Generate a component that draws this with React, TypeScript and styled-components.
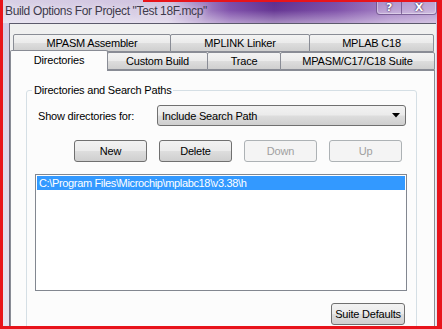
import React from 'react';
import styled, { createGlobalStyle } from 'styled-components';

const GlobalStyle = createGlobalStyle`
  html, body {
    margin: 0;
    padding: 0;
    background: #ffffff;
  }
  body {
    font-family: 'Liberation Sans', Arial, sans-serif;
    font-size: 11px;
    letter-spacing: -0.2px;
    color: #000;
  }
`;

const Window = styled.div`
  position: relative;
  width: 442px;
  height: 329px;
  overflow: hidden;
  display: flex;
  flex-direction: column;
  background: linear-gradient(180deg, #d3c7e1 0%, #ddd6e9 40%, #e7e3ef 100%);
`;

const TitleBar = styled.div`
  height: 23px;
  flex: none;
  display: flex;
  justify-content: space-between;
  align-items: flex-start;
  background:
    linear-gradient(180deg, rgba(255, 255, 255, 0) 0%, rgba(255, 255, 255, 0.05) 45%, rgba(255, 255, 255, 0.45) 100%),
    linear-gradient(90deg, #d8d0e6 0%, #d0c3e0 38%, #7b4aa8 52%, #5e2c8e 62%, #7a4aa6 76%, #a07bc2 88%, #b295cc 100%);
`;

const Title = styled.div`
  padding: 4px 0 0 5px;
  font-size: 12px;
  letter-spacing: -0.35px;
  color: #3e3a4c;
  text-shadow: 0 0 6px rgba(255, 255, 255, 0.9);
`;

const CaptionButtons = styled.div`
  display: flex;
  margin-right: 5px;
  height: 14px;
  border: 1px solid rgba(70, 40, 100, 0.55);
  border-top: none;
  border-radius: 0 0 4px 4px;
  box-shadow: inset 0 0 0 1px rgba(255, 255, 255, 0.35);
  background: linear-gradient(180deg, rgba(255, 255, 255, 0.15), rgba(255, 255, 255, 0.3));
`;

const CaptionButton = styled.div<{ $w: number }>`
  width: ${(p) => p.$w}px;
  display: flex;
  align-items: center;
  justify-content: center;
  font-family: 'DejaVu Sans', sans-serif;
  font-weight: bold;
  font-size: 11px;
  color: #fff;
  text-shadow: 0 0 2px #3a2050, 0 0 1px #3a2050;
  & + & {
    border-left: 1px solid rgba(70, 40, 100, 0.55);
  }
`;

const Client = styled.div`
  flex: 1;
  margin: 0 6px 0 9px;
  border-top: 1px solid #5c5a6c;
  border-left: 1px solid #6e6c7e;
  background: #f0f0f0;
  padding-top: 10px;
  display: flex;
  flex-direction: column;
`;

const TabRow = styled.div<{ $indent: number }>`
  display: flex;
  align-items: flex-end;
  padding-left: ${(p) => p.$indent}px;
  height: ${(p) => (p.$indent ? 18 : 18)}px;
  position: relative;
  z-index: 1;
`;

const Tab = styled.div<{ $w: number; $active?: boolean }>`
  width: ${(p) => p.$w}px;
  height: ${(p) => (p.$active ? 21 : 18)}px;
  margin-bottom: ${(p) => (p.$active ? -1 : 0)}px;
  box-sizing: border-box;
  border: 1px solid #898c95;
  border-bottom: ${(p) => (p.$active ? 'none' : '1px solid #898c95')};
  border-radius: 2px 2px 0 0;
  background: ${(p) =>
    p.$active
      ? '#fcfcfc'
      : 'linear-gradient(180deg, #f3f3f3 0%, #ebebeb 48%, #dddddd 52%, #cfcfcf 100%)'};
  display: flex;
  justify-content: center;
  align-items: ${(p) => (p.$active ? 'flex-start' : 'center')};
  padding-top: ${(p) => (p.$active ? 3 : 0)}px;
  font-size: 11px;
  white-space: nowrap;
  & + & {
    margin-left: -1px;
  }
`;

const Panel = styled.div`
  width: 425px;
  flex: 1;
  box-sizing: border-box;
  border: 1px solid #898c95;
  background: #fcfcfc;
  padding: 19px 17px 0 15px;
`;

const GroupBox = styled.div`
  position: relative;
  height: 260px;
  border: 1px solid #d5dfe5;
  border-radius: 3px;
  display: flex;
  flex-direction: column;
`;

const Legend = styled.span`
  position: absolute;
  top: -7px;
  left: 5px;
  padding: 0 2px;
  line-height: 13px;
  background: #fcfcfc;
  color: #000;
`;

const SelectRow = styled.div`
  display: flex;
  align-items: center;
  margin-top: 14px;
  padding-left: 11px;
  height: 21px;
`;

const Label = styled.span`
  width: 119px;
`;

const Select = styled.div`
  width: 249px;
  height: 21px;
  box-sizing: border-box;
  border: 1px solid #707070;
  border-radius: 3px;
  background: linear-gradient(180deg, #f2f2f2 0%, #ebebeb 48%, #dddddd 52%, #cfcfcf 100%);
  display: flex;
  align-items: center;
  justify-content: space-between;
  padding: 0 5px 0 4px;
`;

const ButtonRow = styled.div`
  display: flex;
  gap: 12px;
  margin-top: 14px;
  padding-left: 47px;
`;

const Button = styled.div<{ $disabled?: boolean; $w?: number }>`
  width: ${(p) => p.$w ?? 73}px;
  height: 22px;
  box-sizing: border-box;
  border: 1px solid ${(p) => (p.$disabled ? '#adb2b5' : '#707070')};
  border-radius: 3px;
  background: ${(p) =>
    p.$disabled
      ? '#f4f4f4'
      : 'linear-gradient(180deg, #f2f2f2 0%, #ebebeb 48%, #dddddd 52%, #cfcfcf 100%)'};
  color: ${(p) => (p.$disabled ? '#a0a0a0' : '#000')};
  display: flex;
  align-items: center;
  justify-content: center;
  white-space: nowrap;
`;

const ListBox = styled.div`
  margin: 12px 0 0 8px;
  width: 372px;
  height: 117px;
  box-sizing: border-box;
  border: 1px solid #828790;
  background: #fff;
  padding: 1px;
`;

const ListItem = styled.div<{ $selected?: boolean }>`
  height: 14px;
  line-height: 14px;
  padding-left: 2px;
  background: ${(p) => (p.$selected ? '#3399ff' : 'transparent')};
  color: ${(p) => (p.$selected ? '#fff' : '#000')};
  letter-spacing: -0.35px;
  white-space: nowrap;
`;

const Footer = styled.div`
  display: flex;
  justify-content: flex-end;
  margin-top: 12px;
  padding-right: 11px;
`;

const RedMark = styled.div`
  position: absolute;
  inset: 0;
  pointer-events: none;
  border-left: 3px solid #e8141b;
  border-right: 5px solid #e8141b;
  border-bottom: 3px solid #e8141b;
  &::before {
    content: '';
    position: absolute;
    top: 0;
    left: 140px;
    right: 0;
    height: 2px;
    background: #e8141b;
  }
`;

const DropArrow = () => (
  <svg width="8" height="5" viewBox="0 0 8 5">
    <path d="M0 0 H8 L4 4.5 Z" fill="#000" />
  </svg>
);

const App = () => {
  return (
    <Window>
      <GlobalStyle />
      <TitleBar>
        <Title>Build Options For Project "Test 18F.mcp"</Title>
        <CaptionButtons>
          <CaptionButton $w={24}>?</CaptionButton>
          <CaptionButton $w={34}>X</CaptionButton>
        </CaptionButtons>
      </TitleBar>
      <Client>
        <TabRow $indent={3}>
          <Tab $w={158}>MPASM Assembler</Tab>
          <Tab $w={140}>MPLINK Linker</Tab>
          <Tab $w={125}>MPLAB C18</Tab>
        </TabRow>
        <TabRow $indent={0}>
          <Tab $w={98} $active>Directories</Tab>
          <Tab $w={101}>Custom Build</Tab>
          <Tab $w={74}>Trace</Tab>
          <Tab $w={155}>MPASM/C17/C18 Suite</Tab>
        </TabRow>
        <Panel>
          <GroupBox>
            <Legend>Directories and Search Paths</Legend>
            <SelectRow>
              <Label>Show directories for:</Label>
              <Select>
                <span>Include Search Path</span>
                <DropArrow />
              </Select>
            </SelectRow>
            <ButtonRow>
              <Button>New</Button>
              <Button>Delete</Button>
              <Button $disabled>Down</Button>
              <Button $disabled>Up</Button>
            </ButtonRow>
            <ListBox>
              <ListItem $selected>C:\Program Files\Microchip\mplabc18\v3.38\h</ListItem>
            </ListBox>
            <Footer>
              <Button $w={74}>Suite Defaults</Button>
            </Footer>
          </GroupBox>
        </Panel>
      </Client>
      <RedMark />
    </Window>
  );
};

export default App;
